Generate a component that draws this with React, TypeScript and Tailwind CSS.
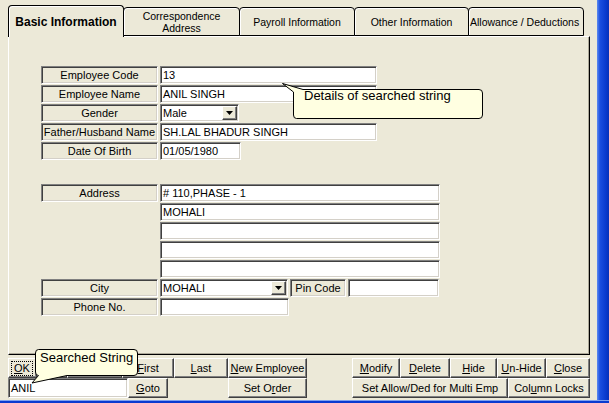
import type { ReactNode } from 'react';

// Win32-style 3D edges
const SUNKEN =
  'border border-t-[#808080] border-l-[#808080] border-b-white border-r-white shadow-[inset_1px_1px_0_#404040,inset_-1px_-1px_0_#d4d0c8]';
const RAISED =
  'border border-t-white border-l-white border-b-[#404040] border-r-[#404040] shadow-[inset_-1px_-1px_0_#808080]';

function Caption({ children, className = '' }: { children?: ReactNode; className?: string }) {
  return (
    <div className={`flex h-[18px] items-center justify-center bg-[#ECE9D8] leading-none ${SUNKEN} ${className}`}>
      {children}
    </div>
  );
}

function TextBox({ value = '', className = '' }: { value?: string; className?: string }) {
  return (
    <div className={`flex h-[18px] items-center overflow-hidden bg-white pl-[2px] leading-none whitespace-nowrap ${SUNKEN} ${className}`}>
      {value}
    </div>
  );
}

function Combo({ value, className = '' }: { value: string; className?: string }) {
  return (
    <div className={`flex h-[18px] items-center bg-white pr-px leading-none ${SUNKEN} ${className}`}>
      <span className="flex-1 pl-[2px]">{value}</span>
      <span className={`flex h-[14px] w-[15px] items-center justify-center bg-[#ECE9D8] ${RAISED}`}>
        <svg width="7" height="4" viewBox="0 0 7 4">
          <path d="M0 0h7L3.5 4z" fill="#000" />
        </svg>
      </span>
    </div>
  );
}

function Btn({ children, className = '' }: { children?: ReactNode; className?: string }) {
  return (
    <div className={`flex h-[20px] shrink-0 items-center justify-center bg-[#ECE9D8] leading-none whitespace-nowrap ${RAISED} ${className}`}>
      {children}
    </div>
  );
}

function Row({ label, children }: { label: string; children: ReactNode }) {
  return (
    <div className="flex gap-[2px]">
      <Caption className="w-[117px]">{label}</Caption>
      {children}
    </div>
  );
}

const tabs = [
  { label: 'Correspondence\nAddress', w: 'w-[117px]' },
  { label: 'Payroll Information', w: 'w-[116px]' },
  { label: 'Other Information', w: 'w-[115px]' },
  { label: 'Allowance / Deductions', w: 'w-[116px]' },
];

export default function App() {
  return (
    <div className="flex h-[403px] w-[609px] flex-col overflow-hidden bg-[#ECE9D8] font-['Liberation_Sans',Arial,sans-serif] text-[11px] text-black">
      <div className="relative flex h-[400px]">
        <div className="flex w-[597px] flex-col pt-[5px] pl-[8px]">
          {/* tab strip */}
          <div className="relative z-10 flex h-[31px] items-start">
            <div className="flex h-[32px] w-[116px] items-center justify-center rounded-t-[4px] border border-b-0 border-black bg-[#ECE9D8] text-[12px] font-bold shadow-[inset_1px_1px_0_#fff]">
              Basic Information
            </div>
            {tabs.map((t, i) => (
              <div
                key={t.label}
                className={`mt-[2px] -ml-px flex h-[29px] items-center overflow-hidden rounded-t-[4px] border border-black bg-[#ECE9D8] text-[10.5px] leading-[12px] whitespace-pre shadow-[inset_1px_1px_0_#fff] ${t.w} ${
                  i === 3 ? 'justify-start pl-px' : 'justify-center text-center'
                }`}
              >
                {t.label}
              </div>
            ))}
          </div>

          {/* tab page */}
          <div className="h-[319px] w-[582px] border border-t-white border-l-white border-r-black border-b-black shadow-[inset_-1px_-1px_0_#aca899]">
            <div className="flex flex-col gap-px pt-[29px] pl-[32px]">
              <Row label="Employee Code">
                <TextBox value="13" className="w-[217px]" />
              </Row>
              <Row label="Employee Name">
                <TextBox value="ANIL SINGH" className="w-[217px]" />
              </Row>
              <Row label="Gender">
                <Combo value="Male" className="w-[79px]" />
              </Row>
              <Row label="Father/Husband Name">
                <TextBox value="SH.LAL BHADUR SINGH" className="w-[217px]" />
              </Row>
              <Row label="Date Of Birth">
                <TextBox value="01/05/1980" className="w-[81px]" />
              </Row>
            </div>

            <div className="mt-[24px] flex flex-col gap-px pl-[32px]">
              <Row label="Address">
                <TextBox value="# 110,PHASE - 1" className="w-[280px]" />
              </Row>
              {['MOHALI', '', '', ''].map((v, i) => (
                <div key={i} className="pl-[119px]">
                  <TextBox value={v} className="w-[280px]" />
                </div>
              ))}
              <Row label="City">
                <Combo value="MOHALI" className="w-[128px]" />
                <Caption className="w-[56px]">Pin Code</Caption>
                <TextBox className="w-[91px]" />
              </Row>
              <Row label="Phone No.">
                <TextBox className="w-[129px]" />
              </Row>
            </div>
          </div>

          {/* command buttons (two of them sit under the balloon) */}
          <div className="mt-[3px] flex">
            <Btn className="w-[29px] justify-start pl-[2px]">
              <span className="border border-dotted border-black px-[2px] py-px">
                <u>O</u>K
              </span>
            </Btn>
            <Btn className="w-[30px]" />
            <Btn className="w-[55px]" />
            <Btn className="w-[52px]">
              <u>F</u>irst
            </Btn>
            <Btn className="w-[54px]">
              <u>L</u>ast
            </Btn>
            <Btn className="w-[79px]">
              <u>N</u>ew Employee
            </Btn>
            <div className="w-[45px]" />
            <Btn className="w-[48px]">
              <u>M</u>odify
            </Btn>
            <Btn className="w-[50px]">
              <u>D</u>elete
            </Btn>
            <Btn className="w-[47px]">
              <u>H</u>ide
            </Btn>
            <Btn className="w-[49px]">
              <u>U</u>n-Hide
            </Btn>
            <Btn className="w-[44px]">
              <u>C</u>lose
            </Btn>
          </div>
          <div className="flex">
            <TextBox value="ANIL" className="h-[20px] w-[120px]" />
            <Btn className="w-[40px]">
              <u>G</u>oto
            </Btn>
            <div className="w-[60px]" />
            <Btn className="w-[79px]">
              Set O<u>r</u>der
            </Btn>
            <div className="w-[45px]" />
            <Btn className="w-[156px]">Set Allow/Ded for Multi Emp</Btn>
            <Btn className="w-[82px]">
              Col<u>u</u>mn Locks
            </Btn>
          </div>
        </div>

        {/* window frame, right side */}
        <div className="w-[12px] bg-[linear-gradient(90deg,#5f8cf0,#1a4ee0_25%,#0a3bd0_70%,#0630b8)]" />

        {/* balloon: details */}
        <div className="absolute top-[83px] left-[282px] z-20 h-[40px] w-[205px]">
          <svg width="205" height="40" className="absolute inset-0">
            <path
              d="M0.5 0.5 L21 6.5 H197 Q200.5 6.5 200.5 10 V32 Q200.5 35.5 197 35.5 H14.5 Q11.5 35.5 11.5 32 V9 Z"
              fill="#FFFFE1"
              stroke="#000"
            />
          </svg>
          <div className="absolute top-[5px] left-[22px] text-[13px] leading-[15px] whitespace-nowrap">
            Details of searched string
          </div>
        </div>

        {/* balloon: searched string */}
        <div className="absolute top-[346px] left-[30px] z-20 h-[40px] w-[110px]">
          <svg width="110" height="40" className="absolute inset-0">
            <path
              d="M8.5 3.5 H104 Q107.5 3.5 107.5 7 V26 Q107.5 29.5 104 29.5 H37 L2 37 L8.5 29.5 Q5.5 29.5 5.5 26 V7 Q5.5 3.5 8.5 3.5 Z"
              fill="#FFFFE1"
              stroke="#000"
            />
          </svg>
          <div className="absolute top-[4px] left-[10px] text-[13px] leading-[15px] whitespace-nowrap">Searched String</div>
        </div>
      </div>
      <div className="h-[3px] border-t border-[#7ea2f0] bg-[#0a3bd0]" />
    </div>
  );
}
